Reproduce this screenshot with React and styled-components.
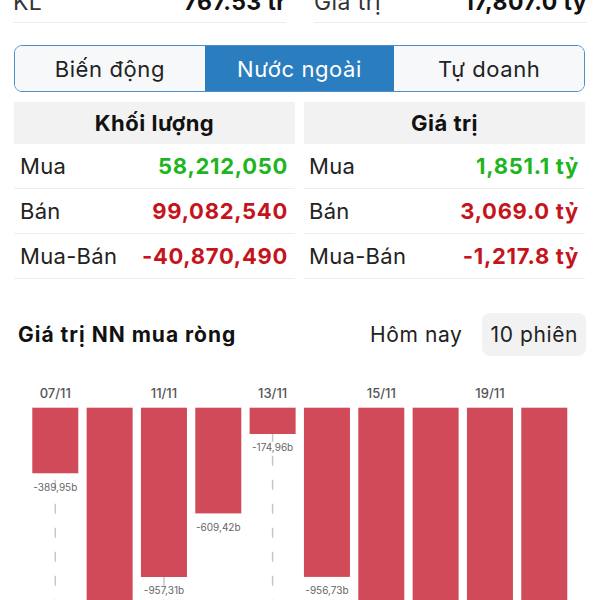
import React from 'react';
import styled, { createGlobalStyle } from 'styled-components';

const GlobalStyle = createGlobalStyle`
  html, body {
    margin: 0;
    padding: 0;
    background: #ffffff;
    overflow: hidden;
  }
  body {
    font-family: Inter, "Noto Sans", "Liberation Sans", sans-serif;
    color: #1c1c1e;
  }
`;

const Page = styled.div`
  width: 600px;
  box-sizing: border-box;
  padding: 0 15px;
`;

const Summary = styled.div`
  display: grid;
  grid-template-columns: 1fr 1fr;
  column-gap: 28px;
  margin: -13px -2px 0;
`;

const SummaryCell = styled.div`
  display: flex;
  justify-content: space-between;
  align-items: center;
  height: 30px;
  padding-bottom: 5px;
  border-bottom: 1px solid #ececec;
  font-size: 23px;
  letter-spacing: 0.4px;
`;

const SummaryLabel = styled.span`
  color: #333;
`;

const SummaryValue = styled.span`
  font-weight: 700;
  color: #111;
`;

const Segmented = styled.div`
  display: flex;
  height: 47px;
  box-sizing: border-box;
  margin: 22px 0 0 -1px;
  border: 1.5px solid #4e8fcb;
  border-radius: 8px;
  overflow: hidden;
`;

const Segment = styled.div`
  flex: 1;
  display: flex;
  align-items: center;
  justify-content: center;
  font-size: 22px;
  letter-spacing: 0.6px;
  background: ${(p) => (p.$active ? '#2a7dbf' : '#f7f8fa')};
  color: ${(p) => (p.$active ? '#ffffff' : '#222222')};
`;

const Table = styled.div`
  display: grid;
  grid-template-columns: 281px 281px;
  column-gap: 9px;
  margin: 10px 0 0 -1px;
`;

const HeaderCell = styled.div`
  height: 42px;
  display: flex;
  align-items: center;
  justify-content: center;
  background: #f2f2f2;
  font-size: 22px;
  font-weight: 700;
  letter-spacing: 0.5px;
  color: #111;
`;

const Row = styled.div`
  display: flex;
  justify-content: space-between;
  align-items: center;
  height: 44px;
  padding: 0 ${(p) => p.$padRight}px 0 ${(p) => p.$padLeft}px;
  border-bottom: 1px solid #eeeeee;
  font-size: 22px;
`;

const RowLabel = styled.span`
  color: #222;
  letter-spacing: 0.3px;
`;

const tones = { up: '#1fb51f', down: '#c5141c' };

const RowValue = styled.span`
  font-weight: 700;
  letter-spacing: 0.7px;
  color: ${(p) => tones[p.$tone]};
`;

const ChartHeader = styled.div`
  display: flex;
  align-items: center;
  justify-content: space-between;
  margin-top: 34px;
  padding-left: 3px;
`;

const ChartTitle = styled.div`
  font-size: 21px;
  font-weight: 700;
  letter-spacing: 1px;
  color: #111;
`;

const Filters = styled.div`
  display: flex;
  gap: 12px;
  margin-right: -1px;
`;

const FilterPill = styled.div`
  height: 43px;
  padding: 0 8px;
  display: flex;
  align-items: center;
  border-radius: 8px;
  font-size: 21px;
  letter-spacing: 0.6px;
  color: #222;
  background: ${(p) => (p.$active ? '#f2f2f2' : 'transparent')};
`;

const ChartSvg = styled.svg`
  display: block;
  margin-top: 14px;
  overflow: visible;
  font-family: Inter, "Noto Sans", sans-serif;
`;

const sessions = [
  { date: '07/11', value: 389.95 },
  { date: '08/11', value: 1254.6 },
  { date: '11/11', value: 957.31 },
  { date: '12/11', value: 609.42 },
  { date: '13/11', value: 174.96 },
  { date: '14/11', value: 956.73 },
  { date: '15/11', value: 1415.2 },
  { date: '18/11', value: 1190.8 },
  { date: '19/11', value: 1322.4 },
  { date: '20/11', value: 1178.9 },
];

const fmt = (v) => '-' + v.toFixed(2).replace('.', ',') + 'b';

function NetChart() {
  const barTop = 37.7;
  const pitch = 54.33;
  const barW = 46;
  return (
    <ChartSvg width="570" height="240">
      {sessions.map((s, i) =>
        i % 2 === 0 ? (
          <line
            key={'g' + i}
            x1={17.3 + i * pitch + barW / 2}
            x2={17.3 + i * pitch + barW / 2}
            y1={barTop}
            y2={260}
            stroke="#c6c6c6"
            strokeWidth="1.5"
            strokeDasharray="10 14"
          />
        ) : null
      )}
      {sessions.map((s, i) => {
        const x = 17.3 + i * pitch;
        const h = s.value * 0.1828 - 5.7;
        return (
          <g key={s.date}>
            {i % 2 === 0 && (
              <text x={x + barW / 2} y={27.5} textAnchor="middle" fontSize="13" fontWeight="500" fill="#555">
                {s.date}
              </text>
            )}
            <rect x={x} y={barTop} width={barW} height={h} fill="#d04a59" />
            <text x={x + barW / 2} y={barTop + h + 17.5} textAnchor="middle" fontSize="10" fill="#666">
              {fmt(s.value)}
            </text>
          </g>
        );
      })}
    </ChartSvg>
  );
}

const rows = [
  { label: 'Mua', vol: '58,212,050', val: '1,851.1 tỷ', tone: 'up' },
  { label: 'Bán', vol: '99,082,540', val: '3,069.0 tỷ', tone: 'down' },
  { label: 'Mua-Bán', vol: '-40,870,490', val: '-1,217.8 tỷ', tone: 'down' },
];

export default function App() {
  return (
    <>
      <GlobalStyle />
      <Page>
        <Summary>
          <SummaryCell>
            <SummaryLabel>KL</SummaryLabel>
            <SummaryValue>767.53 tr</SummaryValue>
          </SummaryCell>
          <SummaryCell>
            <SummaryLabel>Giá trị</SummaryLabel>
            <SummaryValue>17,807.0 tỷ</SummaryValue>
          </SummaryCell>
        </Summary>

        <Segmented>
          <Segment>Biến động</Segment>
          <Segment $active>Nước ngoài</Segment>
          <Segment>Tự doanh</Segment>
        </Segmented>

        <Table>
          <div>
            <HeaderCell>Khối lượng</HeaderCell>
            {rows.map((r) => (
              <Row key={r.label} $padLeft={6} $padRight={7}>
                <RowLabel>{r.label}</RowLabel>
                <RowValue $tone={r.tone}>{r.vol}</RowValue>
              </Row>
            ))}
          </div>
          <div>
            <HeaderCell>Giá trị</HeaderCell>
            {rows.map((r) => (
              <Row key={r.label} $padLeft={5} $padRight={6}>
                <RowLabel>{r.label}</RowLabel>
                <RowValue $tone={r.tone}>{r.val}</RowValue>
              </Row>
            ))}
          </div>
        </Table>

        <ChartHeader>
          <ChartTitle>Giá trị NN mua ròng</ChartTitle>
          <Filters>
            <FilterPill>Hôm nay</FilterPill>
            <FilterPill $active>10 phiên</FilterPill>
          </Filters>
        </ChartHeader>

        <NetChart />
      </Page>
    </>
  );
}
